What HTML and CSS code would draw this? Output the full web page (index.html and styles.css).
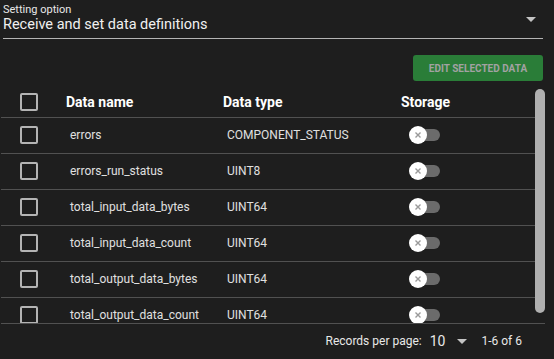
FILE: index.html
```html
<!DOCTYPE html>
<html lang="en">
<head>
    <meta charset="UTF-8">
    <meta name="viewport" content="width=device-width, initial-scale=1.0">
    <title>Data definitions</title>
    <link rel="stylesheet" href="styles.css">
</head>
<body>
    <div class="painel">
        <div class="seletor">
            <div class="seletor-texto">
                <div class="rotulo">Setting option</div>
                <div class="valor">Receive and set data definitions</div>
            </div>
            <svg class="seta-baixo" width="10" height="5" viewBox="0 0 10 5"><path d="M0 0h10L5 5z"/></svg>
        </div>

        <div class="barra">
            <button class="botao-editar" disabled>EDIT SELECTED DATA</button>
        </div>

        <div class="area-tabela">
            <div class="tabela">
                <div class="linha cabecalho">
                    <div class="celula"><span class="caixa"></span></div>
                    <div class="celula">Data name</div>
                    <div class="celula">Data type</div>
                    <div class="celula">Storage</div>
                </div>
                <div id="corpo"></div>
            </div>
            <div class="rolagem"><div class="rolagem-barra"></div></div>
        </div>

        <div class="rodape">
            <span class="rodape-rotulo">Records per page:</span>
            <span class="rodape-valor">10</span>
            <svg class="seta-rodape" width="10" height="5" viewBox="0 0 10 5"><path d="M0 0h10L5 5z"/></svg>
            <span class="rodape-total">1-6 of 6</span>
        </div>
    </div>

    <script>
        const dados = [
            ['errors', 'COMPONENT_STATUS'],
            ['errors_run_status', 'UINT8'],
            ['total_input_data_bytes', 'UINT64'],
            ['total_input_data_count', 'UINT64'],
            ['total_output_data_bytes', 'UINT64'],
            ['total_output_data_count', 'UINT64']
        ];

        const corpo = document.getElementById('corpo');

        // Monta as linhas da tabela
        dados.forEach(([nome, tipo]) => {
            const linha = document.createElement('div');
            linha.className = 'linha';
            linha.innerHTML =
                '<div class="celula"><span class="caixa"></span></div>' +
                '<div class="celula texto">' + nome + '</div>' +
                '<div class="celula texto">' + tipo + '</div>' +
                '<div class="celula"><span class="chave"><span class="bolinha">' +
                '<svg width="8" height="8" viewBox="0 0 8 8"><path d="M1.5 1.5l5 5M6.5 1.5l-5 5"/></svg>' +
                '</span><span class="trilho"></span></span></div>';
            corpo.appendChild(linha);
        });
    </script>
</body>
</html>
```

FILE: styles.css
```css
* {
    box-sizing: border-box;
}

body {
    margin: 0;
    padding: 0;
    background-color: #1e1e1e;
    font-family: Roboto, 'Liberation Sans', sans-serif;
    color: #e0e0e0;
}

.painel {
    width: 544px;
    margin-left: 1px;
}

.seletor {
    display: flex;
    margin: 0 2px;
    padding: 4px 0 5px;
    border-bottom: 1px solid #b4b4b4;
}

.seletor-texto {
    flex: 1;
}

.rotulo {
    font-size: 11px;
    line-height: 12px;
    color: #e8e8e8;
}

.valor {
    font-size: 14.5px;
    line-height: 17px;
    color: #f0f0f0;
}

.seta-baixo {
    margin: 13px 7px 0 0;
    fill: #c4c4c4;
}

.barra {
    display: flex;
    justify-content: flex-end;
    padding-right: 2px;
    margin-top: 16px;
}

.botao-editar {
    width: 130px;
    height: 26px;
    border: none;
    border-radius: 3px;
    background-color: #2a7d38;
    color: #a2a2a2;
    font-family: Roboto, 'Liberation Sans', sans-serif;
    font-size: 10px;
    font-weight: bold;
    padding: 0;
}

/* Tabela + barra de rolagem */
.area-tabela {
    display: flex;
    margin-top: 8px;
    height: 234px;
}

.tabela {
    flex: 1;
    overflow: hidden;
}

.rolagem {
    width: 10px;
}

.rolagem-barra {
    height: 224px;
    background-color: #b0b0b0;
    border-radius: 5px;
}

.linha {
    display: grid;
    grid-template-columns: 62px 157px 167px 1fr;
    height: 36px;
    padding-bottom: 2px;
    border-bottom: 1px solid #515151;
    font-size: 12px;
}

.linha.cabecalho {
    height: 29px;
    font-size: 14px;
    font-weight: bold;
    color: #ffffff;
}

.celula {
    display: flex;
    align-items: center;
    padding-left: 3px;
}

.celula:first-child {
    padding-left: 19px;
}

.celula.texto {
    padding-left: 7px;
}

.cabecalho .celula:last-child {
    padding-left: 14px;
}

.linha:not(.cabecalho) .celula:last-child {
    padding-left: 22px;
}

.caixa {
    width: 18px;
    height: 18px;
    border: 2px solid #b4b4b4;
    border-radius: 2px;
}

.chave {
    display: flex;
    align-items: center;
}

.bolinha {
    position: relative;
    z-index: 1;
    width: 18px;
    height: 18px;
    border-radius: 50%;
    background-color: #ffffff;
    display: flex;
    align-items: center;
    justify-content: center;
}

.bolinha svg {
    stroke: #9a9a9a;
    stroke-width: 1.4;
}

.trilho {
    width: 25px;
    height: 12px;
    margin-left: -12px;
    border-radius: 6px;
    background-color: #6b6b6b;
}

.rodape {
    display: flex;
    align-items: center;
    justify-content: flex-end;
    height: 35px;
    padding-right: 23px;
    border-top: 1px solid #515151;
    font-size: 12px;
    color: #e8e8e8;
}

.rodape-valor {
    font-size: 14px;
    margin-left: 8px;
}

.seta-rodape {
    fill: #c4c4c4;
    margin: 0 14px 0 12px;
}
```
